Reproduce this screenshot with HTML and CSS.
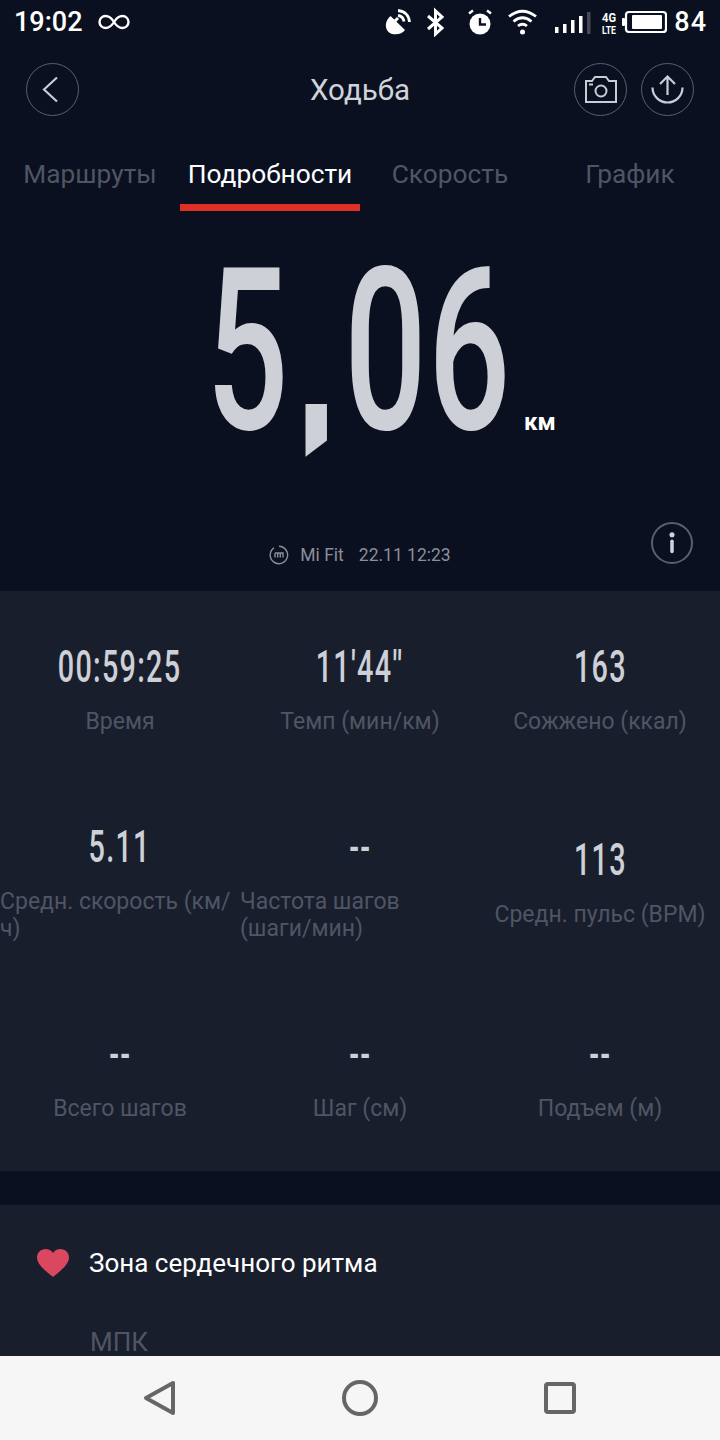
FILE: index.html
```html
<!DOCTYPE html>
<html lang="ru">
<head>
  <meta charset="UTF-8">
  <title>Ходьба</title>
  <link rel="stylesheet" href="styles.css">
</head>
<body>
  <div class="status-bar">
    <span class="status-time">19:02</span>
    <svg class="status-loop" width="32" height="18" viewBox="0 0 32 18" fill="none" stroke="#fff" stroke-width="2.4">
      <path d="M16 9C13 4 10 3 7.500 3A6 6 0 0 0 7.500 15C10 15 13 14 16 9C19 4 22 3 24.500 3A6 6 0 0 1 24.500 15C22 15 19 14 16 9Z"/>
    </svg>
    <svg class="status-icons" width="282" height="30" viewBox="0 0 282 30" fill="none" stroke="#fff">
      <path d="M5.500 9L20 23C17 28 7 29 3 24.500C-1 19.500 1 12.500 5.500 9Z" fill="#fff" stroke="none"/>
      <path d="M10 14L13 11" stroke-width="3"/>
      <path d="M13 3.500C19.500 4 24 8.500 24.500 15" stroke-width="2.800"/>
      <path d="M13 8.500C16.500 9 18.500 11 19 14.500" stroke-width="2.800"/>
      <path d="M43 9L57 21L50.500 27V4L57 10L43 22" stroke-width="3"/>
      <circle cx="95" cy="17" r="10.500" fill="#fff" stroke="none"/>
      <path d="M95 11V17.500H101" stroke="#0a101f" stroke-width="2.400"/>
      <path d="M88 3.500L84 6.500M102 3.500L106 6.500" stroke-width="2.400"/>
      <path d="M124 9.500Q137.500 -1 151 9.500M128.500 14.500Q137.500 7 146.500 14.500M133 19Q137.500 15.500 142 19" stroke-width="2.800"/>
      <circle cx="137.500" cy="25" r="2.500" fill="#fff" stroke="none"/>
      <g fill="#fff" stroke="none">
        <rect x="170" y="20" width="3.500" height="6"/>
        <rect x="178" y="17" width="3.500" height="9"/>
        <rect x="186" y="13" width="3.500" height="13"/>
        <rect x="194" y="9" width="3.500" height="17"/>
        <rect x="202" y="5" width="3.500" height="22" fill="#474b57"/>
        <text x="217" y="15" font-family="Roboto" font-size="12" font-weight="700" textLength="14" lengthAdjust="spacingAndGlyphs">4G</text>
        <text x="217" y="27" font-family="Roboto" font-size="10" font-weight="700" textLength="14" lengthAdjust="spacingAndGlyphs">LTE</text>
        <rect x="237" y="11" width="3" height="8" rx="1"/>
        <rect x="247" y="8" width="30" height="14" rx="1"/>
      </g>
      <rect x="241" y="5" width="40" height="20" rx="3" stroke-width="2.200"/>
    </svg>
    <span class="status-battery">84</span>
  </div>

  <header class="header">
    <a class="round-btn">
      <svg width="51" height="51" viewBox="0 0 51 51" fill="none" stroke="#c9ccd3" stroke-width="2.200">
        <path d="M30 13.500L17 25.500L30 37.500"/>
      </svg>
    </a>
    <h1 class="header-title">Ходьба</h1>
    <div class="header-actions">
      <a class="round-btn">
        <svg width="51" height="51" viewBox="0 0 51 51" fill="none" stroke="#c9ccd3" stroke-width="2">
          <path d="M11 17H17L20 13H31L34 17H41V38H11Z"/>
          <circle cx="26" cy="27" r="5.500"/>
          <path d="M14 20.500H18"/>
        </svg>
      </a>
      <a class="round-btn">
        <svg width="51" height="51" viewBox="0 0 51 51" fill="none" stroke="#c9ccd3" stroke-width="2.200">
          <path d="M10.500 23.500A15 15 0 0 0 40.500 23.500"/>
          <path d="M25.500 31V12.500M18 20L25.500 12.500L33 20"/>
        </svg>
      </a>
    </div>
  </header>

  <nav class="tabs">
    <a class="tab">Маршруты</a>
    <a class="tab tab-active">Подробности</a>
    <a class="tab">Скорость</a>
    <a class="tab">График</a>
  </nav>

  <section class="hero">
    <div class="hero-value">
      <div class="hero-digits"><span class="hero-num">5<span class="hero-comma">,</span>06</span></div>
      <span class="hero-unit">км</span>
    </div>
    <div class="hero-footer">
      <div class="source">
        <svg width="20" height="20" viewBox="0 0 20 20" fill="none" stroke="#8c8f98" stroke-width="1.400">
          <path d="M5 2.800A8.700 8.700 0 1 0 10 1.300"/>
          <path d="M6 8H14V12.500M8.700 8V12.500M11.300 8V12.500M6 8V12.500"/>
        </svg>
        <span>Mi Fit</span>
        <span class="source-date">22.11 12:23</span>
      </div>
      <a class="info-btn">
        <svg width="39" height="39" viewBox="0 0 39 39" fill="#d0d3da">
          <circle cx="19.500" cy="11" r="2.600"/>
          <rect x="17.700" y="16" width="3.600" height="14" rx="1.800"/>
        </svg>
      </a>
    </div>
  </section>

  <section class="stats">
    <div class="stat"><span class="stat-value"><b>00:59:25</b></span><span class="stat-label">Время</span></div>
    <div class="stat"><span class="stat-value"><b>11'44''</b></span><span class="stat-label">Темп (мин/км)</span></div>
    <div class="stat"><span class="stat-value"><b>163</b></span><span class="stat-label">Сожжено (ккал)</span></div>
    <div class="stat"><span class="stat-value"><b>5.11</b></span><span class="stat-label stat-label-wrap">Средн. скорость (км/<br>ч)</span></div>
    <div class="stat"><span class="stat-value"><b>--</b></span><span class="stat-label stat-label-wrap">Частота шагов<br>(шаги/мин)</span></div>
    <div class="stat"><span class="stat-value"><b>113</b></span><span class="stat-label">Средн. пульс (BPM)</span></div>
    <div class="stat"><span class="stat-value"><b>--</b></span><span class="stat-label">Всего шагов</span></div>
    <div class="stat"><span class="stat-value"><b>--</b></span><span class="stat-label">Шаг (см)</span></div>
    <div class="stat"><span class="stat-value"><b>--</b></span><span class="stat-label">Подъем (м)</span></div>
  </section>

  <section class="zones">
    <div class="zones-title">
      <svg width="32" height="28" viewBox="0 0 32 28" fill="#d9485f">
        <path d="M16 28C13 25 0 17 0 8.500C0 3.500 4 0 8.500 0C11.500 0 14.500 1.500 16 4C17.500 1.500 20.500 0 23.500 0C28 0 32 3.500 32 8.500C32 17 19 25 16 28Z"/>
      </svg>
      <span>Зона сердечного ритма</span>
    </div>
    <div class="zones-sub">МПК</div>
  </section>

  <footer class="nav-bar">
    <svg width="36" height="36" viewBox="0 0 36 36" fill="none" stroke="#666" stroke-width="4" stroke-linejoin="round">
      <path d="M31 3V33L4 18Z"/>
    </svg>
    <svg width="36" height="36" viewBox="0 0 36 36" fill="none" stroke="#666" stroke-width="4">
      <circle cx="18" cy="18" r="16"/>
    </svg>
    <svg width="36" height="36" viewBox="0 0 36 36" fill="none" stroke="#666" stroke-width="4" stroke-linejoin="round">
      <rect x="4" y="4" width="28" height="28" rx="2"/>
    </svg>
  </footer>
</body>
</html>
```

FILE: styles.css
```css
* {
  box-sizing: border-box;
}
body {
  margin: 0;
  width: 720px;
  height: 1440px;
  overflow: hidden;
  background: #0a101f;
  font-family: Roboto, "Liberation Sans", sans-serif;
  display: flex;
  flex-direction: column;
}
svg {
  display: block;
  flex: none;
}

.status-bar {
  flex: none;
  height: 44px;
  padding: 0 13px 0 14px;
  display: flex;
  align-items: center;
  color: #fff;
  font-size: 27px;
  font-weight: 500;
}
.status-loop {
  margin-left: 15px;
}
.status-icons {
  margin-left: auto;
}
.status-battery {
  margin-left: 7px;
  letter-spacing: 1px;
}

.header {
  flex: none;
  height: 90px;
  padding: 0 26px;
  display: grid;
  grid-template-columns: 1fr auto 1fr;
  align-items: center;
}
.header-title {
  margin: 2px 0 0;
  font-size: 29.500px;
  font-weight: 400;
  color: #d0d3da;
}
.header-actions {
  display: flex;
  justify-content: flex-end;
  gap: 14px;
}
.round-btn {
  width: 53px;
  height: 53px;
  border: 1px solid #5b5f6b;
  border-radius: 50%;
}

.tabs {
  flex: none;
  height: 77px;
  display: flex;
}
.tab {
  flex: 1;
  padding-top: 26px;
  text-align: center;
  font-size: 26.300px;
  line-height: 28px;
  color: #4f5563;
  border-bottom: 7px solid transparent;
}
.tab-active {
  color: #fff;
  border-bottom-color: #e02f24;
}

.hero {
  flex: none;
  height: 380px;
  display: flex;
  flex-direction: column;
}
.hero-value {
  height: 280px;
  display: grid;
  grid-template-columns: 206px 310px 204px;
}
.hero-digits {
  grid-column: 2;
  width: 310px;
  white-space: nowrap;
}
.hero-num {
  display: block;
  width: 310px;
  font-size: 227px;
  line-height: 280px;
  font-weight: 500;
  letter-spacing: 2px;
  color: #cdd0d6;
  transform: scaleX(.64);
  transform-origin: left top;
}
.hero-comma {
  display: inline-block;
  width: 34px;
  height: 53px;
  margin: 0 27px 0 24px;
  overflow: hidden;
  font-size: 20px;
  line-height: 51px;
  color: transparent;
  background: #cdd0d6;
  clip-path: polygon(0 0, 100% 0, 100% 69%, 0 100%);
  vertical-align: -28px;
}
.hero-unit {
  grid-column: 3;
  align-self: end;
  padding: 0 0 55px 8px;
  font-size: 24px;
  font-weight: 700;
  color: #fff;
}
.hero-footer {
  flex: 1;
  padding: 0 27px 27px;
  display: grid;
  grid-template-columns: 1fr auto 1fr;
  align-items: end;
}
.source {
  grid-column: 2;
  margin-bottom: -1px;
  display: flex;
  align-items: center;
  gap: 11px;
  font-size: 17.500px;
  color: #8c8f98;
}
.source-date {
  margin-left: 4px;
}
.info-btn {
  grid-column: 3;
  justify-self: end;
  width: 42px;
  height: 42px;
  border: 2px solid #5b5f6b;
  border-radius: 50%;
}
.info-btn svg {
  width: 38px;
  height: 38px;
}

.stats {
  flex: none;
  height: 580px;
  background: #191e2d;
  display: grid;
  grid-template-columns: repeat(3, 240px);
  grid-template-rows: repeat(3, 1fr);
}
.stat {
  padding-top: 2px;
  display: flex;
  flex-direction: column;
  align-items: center;
  justify-content: center;
  gap: 16px;
}
.stat-value {
  height: 50px;
  font-size: 45px;
  line-height: 50px;
  color: #cdd0d6;
}
.stat-value b {
  display: inline-block;
  font-weight: 500;
  letter-spacing: 2px;
  transform: scaleX(.64);
}
.stat-label {
  font-size: 23px;
  line-height: 27px;
  color: #4f5563;
  text-align: center;
}
.stat-label-wrap {
  width: 100%;
  text-align: left;
}

.zones {
  flex: 1;
  min-height: 0;
  margin-top: 34px;
  background: #191e2d;
}
.zones-title {
  margin: 43px 0 0 37px;
  display: flex;
  align-items: center;
  gap: 20px;
  font-size: 26px;
  color: #fff;
}
.zones-sub {
  margin: 49px 0 0 90px;
  font-size: 26px;
  color: #4f5563;
}

.nav-bar {
  flex: none;
  height: 84px;
  background: #f6f6f6;
  display: grid;
  grid-template-columns: repeat(3, 200px);
  justify-content: center;
  justify-items: center;
  align-items: center;
}
```
